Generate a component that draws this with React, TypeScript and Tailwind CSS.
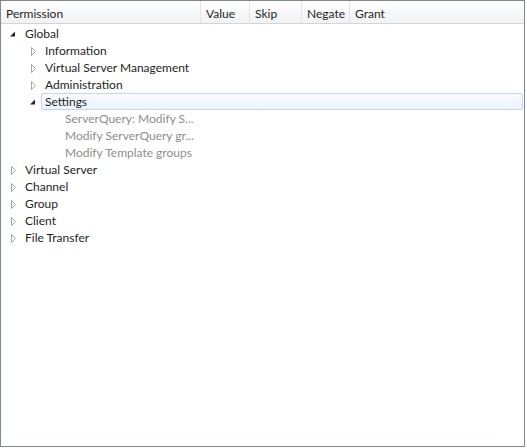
import React from 'react';

type Node = {
  label: string;
  level: number;
  state: 'open' | 'closed' | 'leaf';
  selected?: boolean;
  disabled?: boolean;
};

const rows: Node[] = [
  { label: 'Global', level: 0, state: 'open' },
  { label: 'Information', level: 1, state: 'closed' },
  { label: 'Virtual Server Management', level: 1, state: 'closed' },
  { label: 'Administration', level: 1, state: 'closed' },
  { label: 'Settings', level: 1, state: 'open', selected: true },
  { label: 'ServerQuery: Modify S...', level: 2, state: 'leaf', disabled: true },
  { label: 'Modify ServerQuery gr...', level: 2, state: 'leaf', disabled: true },
  { label: 'Modify Template groups', level: 2, state: 'leaf', disabled: true },
  { label: 'Virtual Server', level: 0, state: 'closed' },
  { label: 'Channel', level: 0, state: 'closed' },
  { label: 'Group', level: 0, state: 'closed' },
  { label: 'Client', level: 0, state: 'closed' },
  { label: 'File Transfer', level: 0, state: 'closed' },
];

const columns = [
  { label: 'Permission', width: 'w-[200px]' },
  { label: 'Value', width: 'w-[49px]' },
  { label: 'Skip', width: 'w-[52px]' },
  { label: 'Negate', width: 'w-[48px]' },
  { label: 'Grant', width: 'flex-1' },
];

function Expander({ state }: { state: Node['state'] }) {
  if (state === 'leaf') return <span className="w-[16px]" />;
  if (state === 'open') {
    return (
      <svg width="16" height="16" viewBox="0 0 16 16" className="shrink-0">
        <path d="M10 5.5 L10 10.5 L5 10.5 Z" fill="#262626" />
      </svg>
    );
  }
  return (
    <svg width="16" height="16" viewBox="0 0 16 16" className="shrink-0">
      <path d="M6.5 4.5 L10.5 8.5 L6.5 12.5 Z" fill="none" stroke="#a6a6a6" strokeWidth="1" />
    </svg>
  );
}

export default function App() {
  return (
    <div className="w-[527px] h-[448px] bg-white font-['Lato','Noto_Sans',sans-serif] text-[12px] text-[#1e1e1e]">
      <div className="w-[525px] h-[447px] border border-[#828790] flex flex-col">
        <div className="flex h-[23px] border-b border-[#d5d5d5] bg-gradient-to-b from-white to-[#f1f2f4]">
          {columns.map((c, i) => (
            <div
              key={c.label}
              className={`${c.width} pl-[5px] pt-[4px] leading-[17px] ${i < columns.length - 1 ? 'border-r border-[#e3e4e6]' : ''}`}
            >
              {c.label}
            </div>
          ))}
        </div>
        <div className="flex flex-col pt-[1px]">
          {rows.map((r) => (
            <div key={r.label} className="flex h-[17px] items-center">
              <div
                className="flex items-center h-[17px] pl-[4px]"
                style={{ width: 4 + r.level * 20 + 16 }}
              >
                <span style={{ width: r.level * 20 }} />
                <Expander state={r.state} />
              </div>
              {r.selected ? (
                <div className="flex-1 mr-[1px] h-[17px] flex items-center pl-[3px] border border-[#c3d6ec] rounded-[2px] bg-gradient-to-b from-[#f9fbfe] to-[#ebf4fe]">
                  {r.label}
                </div>
              ) : (
                <div className={`pl-[4px] leading-[17px] ${r.disabled ? 'text-[#8d8d8d]' : ''}`}>{r.label}</div>
              )}
            </div>
          ))}
        </div>
      </div>
    </div>
  );
}
